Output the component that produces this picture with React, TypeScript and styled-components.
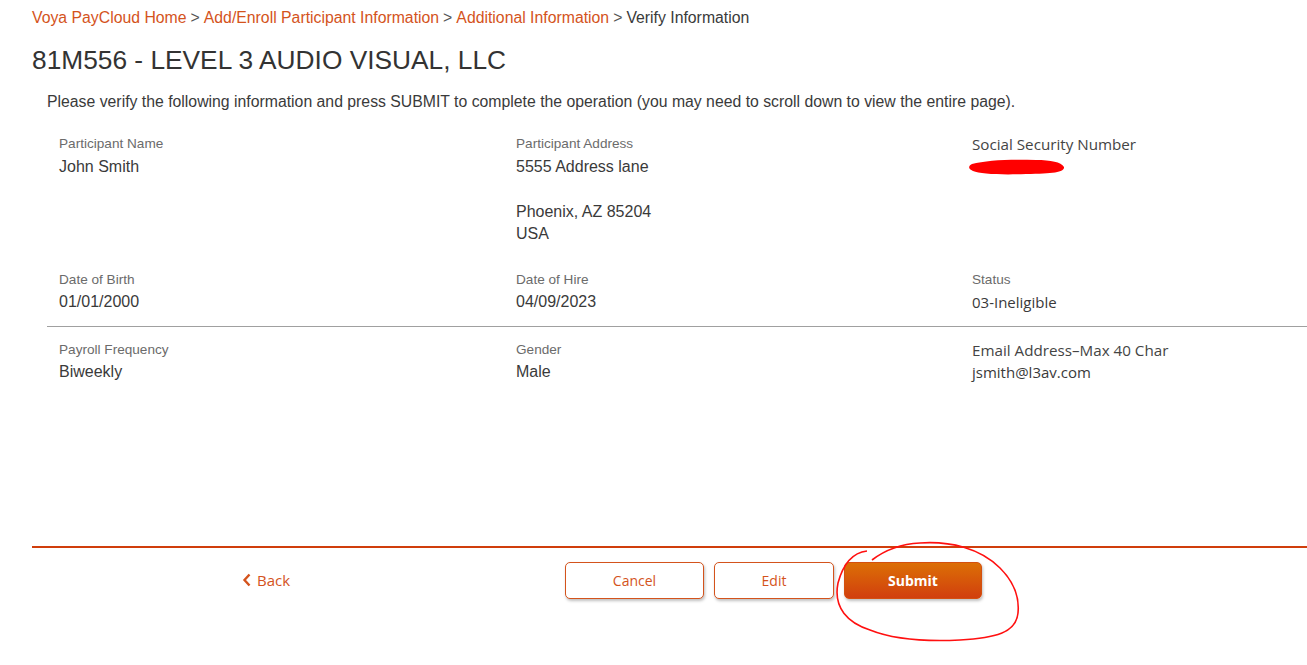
import React from "react";
import styled, { createGlobalStyle } from "styled-components";

const Global = createGlobalStyle`
  html, body { margin: 0; padding: 0; background: #fff; }
  body { font-family: "Liberation Sans", Arial, sans-serif; color: #3a3a3a; overflow: hidden; }
`;

const Page = styled.div`
  width: 1307px;
  height: 665px;
  padding: 8px 0 0 32px;
  box-sizing: border-box;
  position: relative;
  overflow: hidden;
`;

const Breadcrumb = styled.nav`
  font-size: 15.8px;
  line-height: 20px;
  color: #3a3a3a;
  white-space: nowrap;
`;

const Crumb = styled.a`
  color: #d4531c;
  text-decoration: none;
`;

const Sep = styled.span`
  color: #555;
  margin: 0 4px;
`;

const Title = styled.h1`
  margin: 16px 0 0;
  font-size: 26.3px;
  font-weight: 400;
  line-height: 32px;
  color: #333;
`;

const Intro = styled.p`
  margin: 16px 0 0 15px;
  font-size: 15.8px;
  line-height: 20px;
  color: #3a3a3a;
  white-space: nowrap;
`;

const Details = styled.div`
  margin: 23px 0 0 15px;
  width: 1400px;
`;

const Row = styled.div<{ $divider?: boolean }>`
  display: grid;
  grid-template-columns: 457px 456px 457px;
  padding: 0 12px;
  border-bottom: ${(p) => (p.$divider ? "1px solid #a0a0a0" : "none")};
  padding-bottom: ${(p) => (p.$divider ? "12px" : "0")};
  margin-bottom: ${(p) => (p.$divider ? "14px" : "25px")};
`;

const Field = styled.div``;

const Label = styled.div<{ $alt?: boolean }>`
  font-size: ${(p) => (p.$alt ? "15.2px" : "13.6px")};
  line-height: 18px;
  color: ${(p) => (p.$alt ? "#444" : "#6b6b6b")};
  font-family: ${(p) => (p.$alt ? '"Open Sans", sans-serif' : '"Liberation Sans", Arial, sans-serif')};
`;

const Value = styled.div<{ $alt?: boolean }>`
  font-size: ${(p) => (p.$alt ? "15px" : "16px")};
  line-height: 22.5px;
  margin-top: 2.5px;
  color: #3a3a3a;
  font-family: ${(p) => (p.$alt ? '"Open Sans", sans-serif' : '"Liberation Sans", Arial, sans-serif')};
`;

const Spacer = styled.div`
  height: 22.5px;
`;

const Scribble = styled.svg`
  display: block;
  margin: 4px 0 0 -6px;
`;

const Footer = styled.div`
  position: absolute;
  left: 32px;
  right: 0;
  top: 546px;
  border-top: 2px solid #d03e0c;
  display: flex;
  align-items: center;
  height: 64px;
`;

const BackLink = styled.a`
  display: flex;
  align-items: center;
  gap: 5px;
  margin-left: 210px;
  font-family: "Open Sans", sans-serif;
  font-size: 15px;
  color: #d4531c;
  text-decoration: none;
  width: 323px;
`;

const Buttons = styled.div`
  display: flex;
  gap: 10px;
`;

const Button = styled.button<{ $primary?: boolean; $w: number }>`
  width: ${(p) => p.$w}px;
  height: 37px;
  border-radius: 5px;
  font-family: "Open Sans", sans-serif;
  font-size: 14px;
  cursor: pointer;
  border: 1px solid ${(p) => (p.$primary ? "#d45010" : "#d4531c")};
  background: ${(p) => (p.$primary ? "linear-gradient(#dc6f06, #d13f0e)" : "#fff")};
  color: ${(p) => (p.$primary ? "#fff" : "#d4531c")};
  font-weight: ${(p) => (p.$primary ? 700 : 400)};
  box-shadow: 1px 2px 3px rgba(0, 0, 0, 0.25);
`;

const Circle = styled.svg`
  position: absolute;
  left: 830px;
  top: 538px;
  pointer-events: none;
`;

export default function App() {
  return (
    <>
      <Global />
      <Page>
        <Breadcrumb>
          <Crumb>Voya PayCloud Home</Crumb>
          <Sep>&gt;</Sep>
          <Crumb>Add/Enroll Participant Information</Crumb>
          <Sep>&gt;</Sep>
          <Crumb>Additional Information</Crumb>
          <Sep>&gt;</Sep>
          <span>Verify Information</span>
        </Breadcrumb>
        <Title>81M556 - LEVEL 3 AUDIO VISUAL, LLC</Title>
        <Intro>
          Please verify the following information and press SUBMIT to complete the operation (you may need to scroll down to view the entire page).
        </Intro>
        <Details>
          <Row>
            <Field>
              <Label>Participant Name</Label>
              <Value>John Smith</Value>
            </Field>
            <Field>
              <Label>Participant Address</Label>
              <Value>
                5555 Address lane
                <Spacer />
                Phoenix, AZ 85204
                <br />
                USA
              </Value>
            </Field>
            <Field>
              <Label $alt>Social Security Number</Label>
              <Scribble width="104" height="22" viewBox="0 0 104 22">
                <path
                  d="M6 7 C20 3, 45 2, 70 3 C85 3, 95 5, 98 10 C99 15, 88 17, 60 17 C35 18, 14 17, 7 14 C2 12, 2 9, 6 7 Z"
                  fill="#ff0000"
                />
              </Scribble>
            </Field>
          </Row>
          <Row $divider>
            <Field>
              <Label>Date of Birth</Label>
              <Value>01/01/2000</Value>
            </Field>
            <Field>
              <Label>Date of Hire</Label>
              <Value>04/09/2023</Value>
            </Field>
            <Field>
              <Label>Status</Label>
              <Value $alt>03-Ineligible</Value>
            </Field>
          </Row>
          <Row>
            <Field>
              <Label>Payroll Frequency</Label>
              <Value>Biweekly</Value>
            </Field>
            <Field>
              <Label>Gender</Label>
              <Value>Male</Value>
            </Field>
            <Field>
              <Label $alt>Email Address–Max 40 Char</Label>
              <Value $alt>jsmith@l3av.com</Value>
            </Field>
          </Row>
        </Details>
        <Footer>
          <BackLink>
            <svg width="10" height="14" viewBox="0 0 10 14">
              <path d="M7.5 1.5 L2.5 7 L7.5 12.5" stroke="#d4531c" strokeWidth="2.4" fill="none" />
            </svg>
            Back
          </BackLink>
          <Buttons>
            <Button $w={139}>Cancel</Button>
            <Button $w={120}>Edit</Button>
            <Button $primary $w={138}>Submit</Button>
          </Buttons>
        </Footer>
        <Circle width="200" height="115" viewBox="0 0 200 115">
          <path
            d="M37 13 C20 15, 12 30, 8 45 C3 70, 18 85, 40 92 C60 100, 90 104, 130 102 C165 100, 186 95, 188 75 C190 55, 180 40, 170 30 C150 10, 120 3, 90 5 C70 6, 55 12, 42 22"
            stroke="#ff1010"
            strokeWidth="1.6"
            fill="none"
          />
        </Circle>
      </Page>
    </>
  );
}
